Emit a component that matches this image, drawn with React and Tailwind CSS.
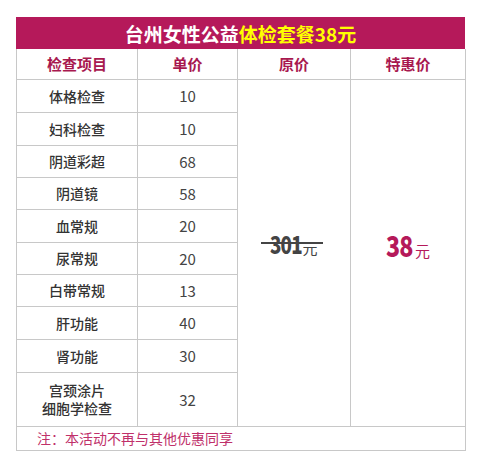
import React from "react";

const rows = [
  ["体格检查", "10", 33],
  ["妇科检查", "10", 33],
  ["阴道彩超", "68", 32],
  ["阴道镜", "58", 32],
  ["血常规", "20", 33],
  ["尿常规", "20", 32],
  ["白带常规", "13", 32],
  ["肝功能", "40", 33],
  ["肾功能", "30", 33],
];

export default function App() {
  const cjk = { fontFamily: '"Noto Sans CJK SC", "Noto Sans", sans-serif' };
  const nameCell = "border border-[#c8c8c8] text-center text-[14px] font-medium text-[#333] p-0 leading-none";
  const numCell = "border border-[#c8c8c8] text-center text-[15px] font-normal text-[#444] p-0 leading-none";
  return (
    <div className="w-[480px] h-[470px] bg-white pt-[17px] pl-[16px]" style={cjk}>
      <div className="w-[449px]">
        <div className="h-[32px] bg-[#b5195a] flex items-center justify-center text-[19px] font-bold leading-none">
          <span className="text-white">台州女性公益</span>
          <span className="text-[#ffff00]">体检套餐38元</span>
        </div>
        <table className="border-collapse table-fixed w-[449px]">
          <colgroup>
            <col className="w-[121px]" />
            <col className="w-[100px]" />
            <col className="w-[113px]" />
            <col className="w-[115px]" />
          </colgroup>
          <tbody>
            <tr className="h-[30px]">
              {["检查项目", "单价", "原价", "特惠价"].map((t) => (
                <td key={t} className="border border-t-0 border-[#c8c8c8] text-center text-[15px] font-bold text-[#a8184f] p-0 leading-none">
                  {t}
                </td>
              ))}
            </tr>
            {rows.map(([name, price, h], i) => (
              <tr key={name} style={{ height: h }}>
                <td className={nameCell}>{name}</td>
                <td className={numCell}>{price}</td>
                {i === 0 && (
                  <>
                    <td rowSpan={10} className="border border-[#c8c8c8] text-center p-0">
                      <span className="relative top-[-7px] inline-flex items-baseline text-[#444]">
                        <span className="inline-block w-[32px] text-left whitespace-nowrap">
                          <span className="inline-block origin-left scale-x-[0.78] text-[24px] font-black leading-none tracking-[-1px]">301</span>
                        </span>
                        <span className="text-[15px] leading-none">元</span>
                        <span className="absolute left-[-9px] right-[-5px] top-[10px] h-[2px] bg-[#444]" />
                      </span>
                    </td>
                    <td rowSpan={10} className="border border-[#c8c8c8] text-center p-0">
                      <span className="relative top-[-7px] inline-flex items-baseline text-[#b5195a]">
                        <span className="inline-block w-[29px] text-left whitespace-nowrap">
                          <span className="inline-block origin-left scale-x-[0.8] text-[29px] font-black leading-none tracking-[-1px]">38</span>
                        </span>
                        <span className="text-[15px] leading-none">元</span>
                      </span>
                    </td>
                  </>
                )}
              </tr>
            ))}
            <tr className="h-[54px]">
              <td className="border border-[#c8c8c8] text-center text-[14px] font-medium text-[#333] p-0 leading-[18px]">
                <div>宫颈涂片</div>
                <div>细胞学检查</div>
              </td>
              <td className={numCell}>32</td>
            </tr>
            <tr className="h-[24px]">
              <td colSpan={4} className="border border-[#c8c8c8] text-left text-[14px] text-[#c0306a] p-0 pl-[20px] leading-none">
                注：本活动不再与其他优惠同享
              </td>
            </tr>
          </tbody>
        </table>
      </div>
    </div>
  );
}
